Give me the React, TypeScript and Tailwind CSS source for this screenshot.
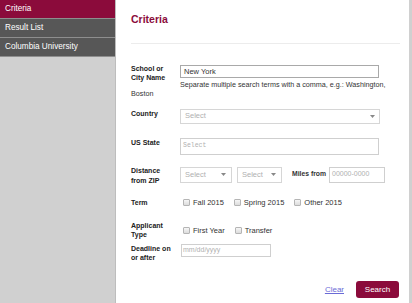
import React from 'react'

const navItems = [
  { label: 'Criteria', active: true },
  { label: 'Result List', active: false },
  { label: 'Columbia University', active: false },
]

const Label = ({ children, className = '' }: { children: React.ReactNode; className?: string }) => (
  <div className={`w-[49px] shrink-0 text-[7px] font-bold leading-[9px] text-[#222] ${className}`}>{children}</div>
)

const Arrow = () => (
  <svg width="5" height="3" viewBox="0 0 5 3" className="shrink-0">
    <path d="M0 0h5L2.5 3z" fill="#888" />
  </svg>
)

const Check = ({ label }: { label: string }) => (
  <label className="flex items-center gap-[3px] text-[7.5px] leading-[9px] text-[#333]">
    <span className="h-[7px] w-[7px] rounded-[1px] border border-[#b5b5b5] bg-gradient-to-b from-[#f6f6f6] to-[#dcdcdc]" />
    {label}
  </label>
)

export default function App() {
  return (
    <div className="flex h-[303px] w-[412px] bg-[#d0d0d0] font-['Liberation_Sans',Arial,sans-serif]">
      <nav className="w-[115px] shrink-0 bg-[#d0d0d0]">
        {navItems.map((item) => (
          <div
            key={item.label}
            className={`flex h-[19px] items-center border-b border-[#8e8e8e] px-[5px] text-[8.2px] text-white ${
              item.active ? 'bg-[#8b0b3b]' : 'bg-[#575757]'
            }`}
          >
            {item.label}
          </div>
        ))}
      </nav>

      <main className="w-[294px] shrink-0 border-l border-[#bdbdbd] bg-white pl-[15px] pr-[9px]">
        <div className="border-b border-[#ececec] pb-[17px] pt-[12px] text-[10.5px] font-bold leading-[14px] text-[#8b0b3b]">
          Criteria
        </div>

        <div className="mt-[20px] flex">
          <Label>
            School or
            <br />
            City Name
          </Label>
          <div className="pt-[1px]">
            <div className="flex h-[13px] w-[199px] items-center border border-[#a9a9a9] px-[3px] text-[7.5px] text-[#333]">
              New York
            </div>
            <div className="mt-[1.5px] whitespace-nowrap text-[7.2px] leading-[9px] text-[#333]">
              Separate multiple search terms with a comma, e.g.: Washington,
            </div>
          </div>
        </div>
        <div className="text-[7.2px] leading-[9px] text-[#333]">Boston</div>

        <div className="mt-[11px] flex">
          <Label className="pt-[0.5px]">Country</Label>
          <div className="flex h-[15px] w-[200px] items-center justify-between border border-[#d6d6d6] pl-[4px] pr-[4px] text-[7.5px] text-[#b0b0b0]">
            Select
            <Arrow />
          </div>
        </div>

        <div className="mt-[14px] flex">
          <Label>US State</Label>
          <div className="flex h-[17px] w-[199px] items-center border border-[#cfcfcf] px-[2px] font-['Liberation_Mono',monospace] text-[6.5px] text-[#b0b0b0]">
            Select
          </div>
        </div>

        <div className="mt-[11px] flex">
          <Label className="leading-[10px]">
            Distance
            <br />
            from ZIP
          </Label>
          <div className="flex items-start pt-[1px]">
            <div className="flex h-[16px] w-[52px] items-center justify-between border border-[#d6d6d6] pl-[4px] pr-[5px] text-[7.5px] text-[#b0b0b0]">
              Select
              <Arrow />
            </div>
            <div className="ml-[5px] flex h-[16px] w-[45px] items-center justify-between border border-[#d6d6d6] pl-[4px] pr-[5px] text-[7.5px] text-[#b0b0b0]">
              Select
              <Arrow />
            </div>
            <div className="ml-[10px] pt-[2px] text-[6.8px] font-bold leading-[9px] text-[#333]">Miles from</div>
            <div className="ml-[3px] flex h-[16px] w-[56px] items-center border border-[#cfcfcf] px-[2px] text-[7px] text-[#b0b0b0]">
              00000-0000
            </div>
          </div>
        </div>

        <div className="mt-[12.5px] flex">
          <Label>Term</Label>
          <div className="flex gap-[10px] pl-[3px]">
            <Check label="Fall 2015" />
            <Check label="Spring 2015" />
            <Check label="Other 2015" />
          </div>
        </div>

        <div className="mt-[14px] flex">
          <Label>
            Applicant
            <br />
            Type
          </Label>
          <div className="flex gap-[10px] pl-[3px] pt-[0.5px]">
            <Check label="First Year" />
            <Check label="Transfer" />
          </div>
        </div>

        <div className="mt-[5px] flex">
          <Label>
            Deadline on
            <br />
            or after
          </Label>
          <div className="ml-[1px] flex h-[13px] w-[90px] items-center border border-[#cfcfcf] px-[1px] text-[7px] text-[#b0b0b0]">
            mm/dd/yyyy
          </div>
        </div>

        <div className="mt-[19px] flex items-center justify-end gap-[12px] pr-[1px]">
          <a href="#" className="text-[8px] text-[#6b6bd6] underline">
            Clear
          </a>
          <button className="h-[17px] w-[43px] rounded-[3px] bg-[#8b0b3b] text-[8px] text-white">Search</button>
        </div>
      </main>
    </div>
  )
}
